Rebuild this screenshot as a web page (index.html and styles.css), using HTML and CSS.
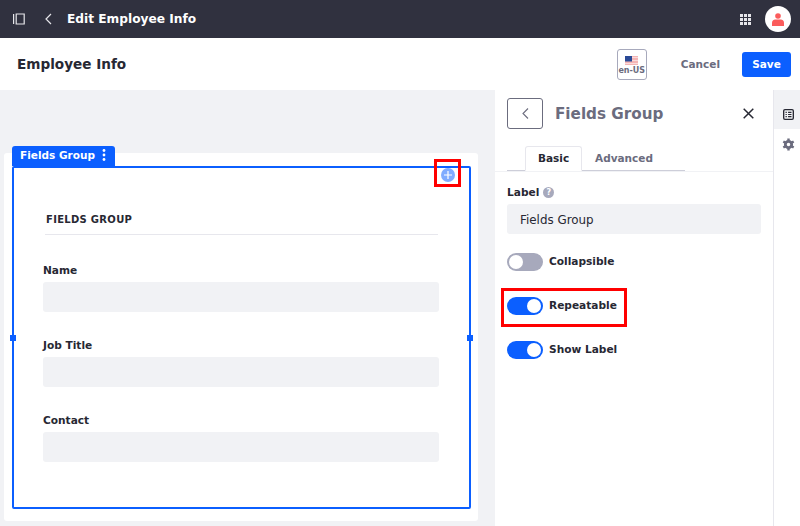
FILE: index.html
```html
<!DOCTYPE html>
<html lang="en">
<head>
	<meta charset="UTF-8">
	<title>Edit Employee Info</title>
	<link rel="stylesheet" href="styles.css">
</head>
<body>
	<div class="topbar">
		<svg class="panel-icon" width="12" height="12" viewBox="0 0 12 12"><path d="M.6 1v10M3.2 1h8v10h-8z" fill="none" stroke="#e6e6ea" stroke-width="1.2"/></svg>
		<svg class="back-icon" width="9" height="12" viewBox="0 0 9 12"><path d="M7 1 2 6l5 5" fill="none" stroke="#e6e6ea" stroke-width="1.2"/></svg>
		<span class="topbar-title">Edit Employee Info</span>
		<svg class="apps-icon" width="11" height="11" viewBox="0 0 11 11" fill="#e6e6ea">
			<rect width="3" height="3"/><rect x="4" width="3" height="3"/><rect x="8" width="3" height="3"/>
			<rect y="4" width="3" height="3"/><rect x="4" y="4" width="3" height="3"/><rect x="8" y="4" width="3" height="3"/>
			<rect y="8" width="3" height="3"/><rect x="4" y="8" width="3" height="3"/><rect x="8" y="8" width="3" height="3"/>
		</svg>
		<div class="avatar">
			<svg width="12" height="13" viewBox="0 0 12 13" fill="#fb5c5c"><circle cx="6" cy="3" r="2.8"/><path d="M0 13V9.500C0 7.500 2 6.500 3 6.500h6c1 0 3 1 3 3V13z"/></svg>
		</div>
	</div>

	<div class="header">
		<h1 class="page-title">Employee Info</h1>
		<div class="locale">
			<svg width="13" height="9" viewBox="0 0 13 9"><rect width="13" height="9" fill="#f4b4b4"/><path d="M0 1.500h13M0 4.500h13M0 7.500h13" stroke="#fbe3e3" stroke-width=".8"/><rect width="7" height="5.500" fill="#2a4a96"/></svg>
			<span>en-US</span>
		</div>
		<span class="cancel">Cancel</span>
		<span class="save">Save</span>
	</div>

	<div class="main">
		<div class="canvas">
			<div class="card">
				<div class="group">
					<div class="group-tag">Fields Group
						<svg width="4" height="12" viewBox="0 0 4 12" fill="#fff"><circle cx="2" cy="1.500" r="1.400"/><circle cx="2" cy="6" r="1.400"/><circle cx="2" cy="10.500" r="1.400"/></svg>
					</div>
					<span class="handle handle-left"></span>
					<span class="handle handle-right"></span>
					<div class="add-btn">
						<svg width="8" height="8" viewBox="0 0 8 8"><path d="M4 0v8M0 4h8" stroke="#fff" stroke-width="1.200"/></svg>
					</div>
					<div class="group-title">FIELDS GROUP</div>
					<div class="field"><label class="field-label">Name</label><div class="field-input"></div></div>
					<div class="field"><label class="field-label">Job Title</label><div class="field-input"></div></div>
					<div class="field"><label class="field-label">Contact</label><div class="field-input"></div></div>
				</div>
			</div>
			<div class="mark mark-add"></div>
		</div>

		<div class="sidebar">
			<div class="side-head">
				<div class="side-back">
					<svg width="9" height="13" viewBox="0 0 9 13"><path d="M7 1.500 2 6.500l5 5" fill="none" stroke="#6b6c7e" stroke-width="1.100"/></svg>
				</div>
				<span class="side-title">Fields Group</span>
				<svg class="side-close" width="11" height="11" viewBox="0 0 11 11"><path d="m.7.7 9.600 9.600M10.300.7.700 10.300" stroke="#272833" stroke-width="1.500"/></svg>
			</div>
			<div class="tabs">
				<div class="tab-list">
					<span class="tab tab-active">Basic</span>
					<span class="tab">Advanced</span>
				</div>
			</div>
			<div class="side-body">
				<div class="label-row">Label <span class="help">?</span></div>
				<div class="text-input">Fields Group</div>
				<div class="toggle-row"><span class="toggle"></span>Collapsible</div>
				<div class="toggle-row"><span class="toggle toggle-on"></span>Repeatable</div>
				<div class="toggle-row"><span class="toggle toggle-on"></span>Show Label</div>
				<div class="mark mark-repeat"></div>
			</div>
		</div>

		<div class="rail">
			<div class="rail-btn rail-active">
				<svg width="11" height="11" viewBox="0 0 13 13"><rect x=".8" y=".8" width="11.400" height="11.400" rx="1.500" fill="none" stroke="#272833" stroke-width="1.600"/><path d="M3 4h1.500M6 4h4M3 6.500h1.500M6 6.500h4M3 9h1.500M6 9h4" stroke="#272833" stroke-width="1.400"/></svg>
			</div>
			<div class="rail-btn">
				<svg width="13" height="13" viewBox="0 0 14 14"><circle cx="7" cy="7" r="3.400" fill="none" stroke="#6b6c7e" stroke-width="3"/><path d="M7 .5v3M7 10.500v3M1.400 3.750l2.600 1.500M10 8.750l2.600 1.500M1.400 10.250 4 8.750M10 5.250l2.600-1.500" stroke="#6b6c7e" stroke-width="2.600"/></svg>
			</div>
		</div>
	</div>
</body>
</html>
```

FILE: styles.css
```css
* {
	box-sizing: border-box;
}
body {
	margin: 0;
	height: 526px;
	overflow: hidden;
	display: flex;
	flex-direction: column;
	background-color: #f1f2f5;
	color: #272833;
	font-family: "DejaVu Sans", sans-serif;
}
.topbar {
	height: 38px;
	flex: none;
	display: flex;
	align-items: center;
	padding: 0 9px 0 13px;
	background-color: #30313f;
	color: #fff;
}
.back-icon {
	margin-left: 19px;
}
.topbar-title {
	margin-left: 14px;
	font-size: 12.200px;
	font-weight: 700;
}
.apps-icon {
	margin-left: auto;
}
.avatar {
	width: 26px;
	height: 26px;
	margin-left: 14px;
	display: flex;
	align-items: center;
	justify-content: center;
	border-radius: 50%;
	background-color: #fff;
}
.header {
	height: 52px;
	flex: none;
	display: flex;
	align-items: center;
	padding: 0 9px 0 17px;
	background-color: #fff;
}
.page-title {
	margin: 0 auto 0 0;
	font-size: 13.600px;
	font-weight: 700;
}
.locale {
	width: 30px;
	height: 31px;
	display: flex;
	flex-direction: column;
	align-items: center;
	gap: 1px;
	padding-top: 6px;
	border: 1px solid #a7a9bc;
	border-radius: 3px;
	color: #6b6c7e;
	font-size: 8px;
	font-weight: 700;
	line-height: 10px;
	white-space: nowrap;
}
.cancel {
	margin: 0 22px 0 34px;
	color: #6b6c7e;
	font-size: 10.500px;
	font-weight: 700;
}
.save {
	width: 49px;
	height: 25px;
	display: flex;
	align-items: center;
	justify-content: center;
	border-radius: 3px;
	background-color: #0b5fff;
	color: #fff;
	font-size: 10.500px;
	font-weight: 700;
}
.main {
	flex: 1;
	display: flex;
	min-height: 0;
}
.canvas {
	position: relative;
	width: 495px;
	flex: none;
	padding: 63px 17px 0 4px;
}
.card {
	height: 368px;
	padding: 13px 7px 12px 8px;
	border-radius: 3px;
	background-color: #fff;
}
.group {
	position: relative;
	height: 343px;
	padding: 46px 30px 0 29px;
	border: 2px solid #0b5fff;
	border-radius: 2px;
}
.group-tag {
	position: absolute;
	left: -2px;
	top: -22px;
	width: 103px;
	height: 20px;
	display: flex;
	align-items: center;
	gap: 7px;
	padding: 0 0 3px 8px;
	border-radius: 3px 3px 0 0;
	background-color: #0b5fff;
	color: #fff;
	font-size: 10.500px;
	font-weight: 700;
}
.handle {
	position: absolute;
	top: 167px;
	width: 6px;
	height: 6px;
	background-color: #0b5fff;
}
.handle-left {
	left: -4px;
}
.handle-right {
	right: -4px;
}
.add-btn {
	position: absolute;
	top: 0;
	right: 14px;
	width: 14px;
	height: 14px;
	display: flex;
	align-items: center;
	justify-content: center;
	border-radius: 50%;
	background-color: #80acff;
}
.group-title {
	height: 21px;
	margin: 0 1px 28px 2px;
	padding-left: 1px;
	border-bottom: 1px solid #e7e7ed;
	font-size: 10px;
	font-weight: 700;
	letter-spacing: .3px;
	line-height: 12px;
}
.field {
	height: 75px;
}
.field-label {
	display: block;
	margin-bottom: 5px;
	font-size: 10.600px;
	font-weight: 700;
	line-height: 14px;
}
.field-input {
	height: 30px;
	border-radius: 3px;
	background-color: #f1f2f5;
}
.sidebar {
	width: 278px;
	flex: none;
	background-color: #fff;
}
.side-head {
	height: 47px;
	display: flex;
	align-items: center;
	padding: 0 19px 0 12px;
}
.side-back {
	width: 36px;
	height: 31px;
	display: flex;
	align-items: center;
	justify-content: center;
	border: 1px solid #6b6c7e;
	border-radius: 3px;
}
.side-title {
	margin-left: 12px;
	color: #6b6c7e;
	font-size: 15.200px;
	font-weight: 700;
}
.side-close {
	margin-left: auto;
}
.tabs {
	height: 35px;
	padding: 9px 0 0 12px;
	border-bottom: 1px solid #f1f2f5;
}
.tab-list {
	width: 178px;
	height: 25px;
	display: flex;
	border-bottom: 1px solid #cdced9;
}
.tab {
	height: 25px;
	padding: 0 12px;
	border: 1px solid transparent;
	color: #6b6c7e;
	font-size: 10.500px;
	font-weight: 700;
	line-height: 23px;
}
.tab-active {
	width: 57px;
	margin-left: 18px;
	border-color: #e7e7ed #e7e7ed #fff;
	border-radius: 3px 3px 0 0;
	background-color: #fff;
	color: #272833;
}
.side-body {
	position: relative;
	padding: 12px 12px 0;
}
.label-row {
	display: flex;
	align-items: center;
	gap: 4px;
	height: 16px;
	font-size: 10.600px;
	font-weight: 700;
}
.help {
	width: 11px;
	height: 11px;
	display: flex;
	align-items: center;
	justify-content: center;
	border-radius: 50%;
	background-color: #a7a9bc;
	color: #fff;
	font-size: 8px;
}
.text-input {
	height: 30px;
	margin-top: 4px;
	margin-bottom: 19px;
	padding-left: 13px;
	border-radius: 3px;
	background-color: #f1f2f5;
	color: #272833;
	font-size: 11.900px;
	line-height: 32px;
}
.toggle-row {
	height: 18px;
	margin-bottom: 26px;
	display: flex;
	align-items: flex-start;
	gap: 6px;
	font-size: 10.600px;
	font-weight: 700;
	line-height: 16px;
}
.toggle {
	position: relative;
	width: 36px;
	height: 18px;
	border-radius: 9px;
	background-color: #a7a9bc;
}
.toggle::after {
	content: "";
	position: absolute;
	top: 2px;
	left: 2px;
	width: 14px;
	height: 14px;
	border-radius: 50%;
	background-color: #fff;
}
.toggle-on {
	background-color: #0b5fff;
}
.toggle-on::after {
	left: 20px;
}
.mark {
	position: absolute;
	border: 3px solid #f00;
}
.mark-add {
	left: 434px;
	top: 69px;
	width: 27px;
	height: 28px;
}
.mark-repeat {
	left: 6px;
	top: 116px;
	width: 126px;
	height: 39px;
}
.rail {
	flex: 1;
	border-left: 1px solid #e7e7ed;
	background-color: #fff;
}
.rail-btn {
	height: 30px;
	padding-left: 3px;
	display: flex;
	align-items: center;
	justify-content: center;
}
.rail-active {
	height: 39px;
	padding-top: 9px;
	background-color: #f1f2f5;
}
```
